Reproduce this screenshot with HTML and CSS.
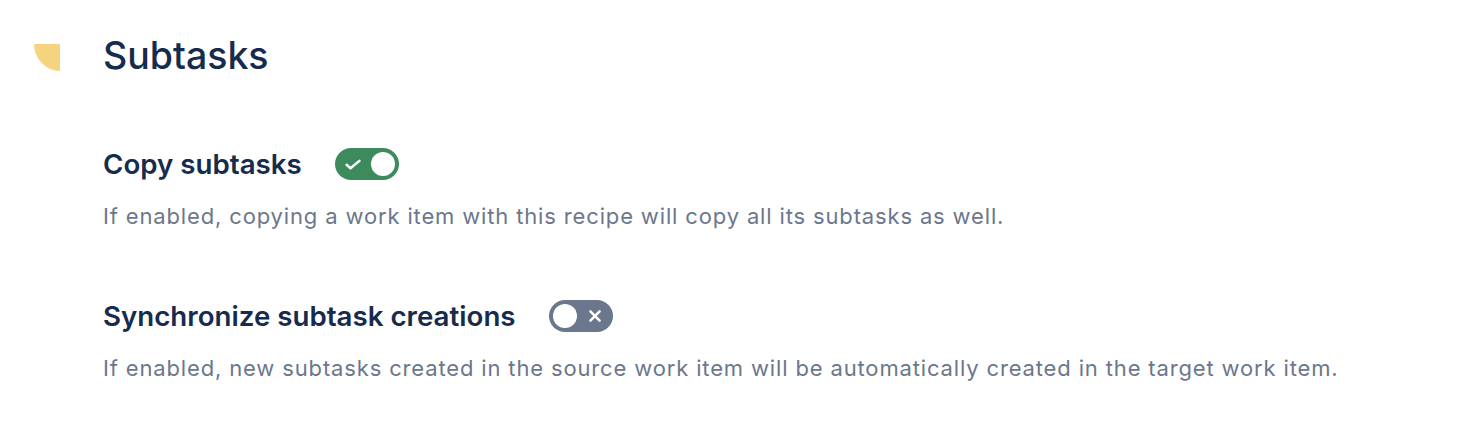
FILE: index.html
```html
<!DOCTYPE html>
<html lang="en">
<head>
  <meta charset="UTF-8" />
  <meta name="viewport" content="width=device-width, initial-scale=1.0" />
  <title>Subtasks</title>
  <link rel="stylesheet" href="styles.css">
</head>
<body>
  <section class="panel">
    <header class="panel-head">
      <span class="panel-icon"></span>
      <h1>Subtasks</h1>
    </header>

    <div class="setting">
      <div class="setting-row">
        <span class="setting-label">Copy subtasks</span>
        <span class="toggle on">
          <svg class="toggle-mark" width="16" height="16" viewBox="0 0 16 16">
            <path d="M1.6 8.8l3.9 3.5 8.9-7.4" fill="none" stroke="#fff" stroke-width="2.5" stroke-linecap="round" stroke-linejoin="round"/>
          </svg>
          <span class="knob"></span>
        </span>
      </div>
      <p class="setting-desc">If enabled, copying a work item with this recipe will copy all its subtasks as well.</p>
    </div>

    <div class="setting">
      <div class="setting-row">
        <span class="setting-label">Synchronize subtask creations</span>
        <span class="toggle off">
          <span class="knob"></span>
          <svg class="toggle-mark" width="16" height="16" viewBox="0 0 16 16">
            <path d="M3.4 3.4l9.2 9.2M12.6 3.4l-9.2 9.2" fill="none" stroke="#fff" stroke-width="2.5" stroke-linecap="round"/>
          </svg>
        </span>
      </div>
      <p class="setting-desc">If enabled, new subtasks created in the source work item will be automatically created in the target work item.</p>
    </div>
  </section>
</body>
</html>
```

FILE: styles.css
```css
body {
  margin: 0;
  background-color: #fff;
  font-family: Inter, "Noto Sans", sans-serif;
  color: #172b4d;
}
.panel {
  padding: 34px 0 0 34px;
}
.panel-head {
  display: flex;
  align-items: center;
  gap: 43px;
  height: 44px;
}
.panel-icon {
  width: 26px;
  height: 27px;
  background-color: #f6d47f;
  border-bottom-left-radius: 26px 27px;
  align-self: flex-start;
  margin-top: 10px;
}
.panel-head h1 {
  margin: 0;
  font-size: 37.5px;
  line-height: 44px;
  font-weight: 500;
  color: #172b4d;
}
.setting {
  margin-left: 69px;
}
.setting:first-of-type {
  margin-top: 70px;
}
.setting + .setting {
  margin-top: 70px;
}
.setting-row {
  display: flex;
  align-items: center;
  gap: 33px;
  height: 32px;
}
.setting-label {
  font-size: 27.7px;
  line-height: 32px;
  font-weight: 600;
  color: #172b4d;
}
.setting-desc {
  margin: 22px 0 0 0;
  font-size: 22px;
  line-height: 28px;
  color: #6b778c;
  letter-spacing: 0.85px;
}
.toggle {
  display: flex;
  align-items: center;
  justify-content: space-between;
  box-sizing: border-box;
  width: 64px;
  height: 32px;
  border-radius: 16px;
}
.toggle.on {
  background-color: #3d8a5d;
  padding: 0 4px 0 10px;
}
.toggle.off {
  background-color: #6b778c;
  padding: 0 10px 0 4px;
}
.knob {
  width: 24px;
  height: 24px;
  border-radius: 50%;
  background-color: #fff;
}
```
